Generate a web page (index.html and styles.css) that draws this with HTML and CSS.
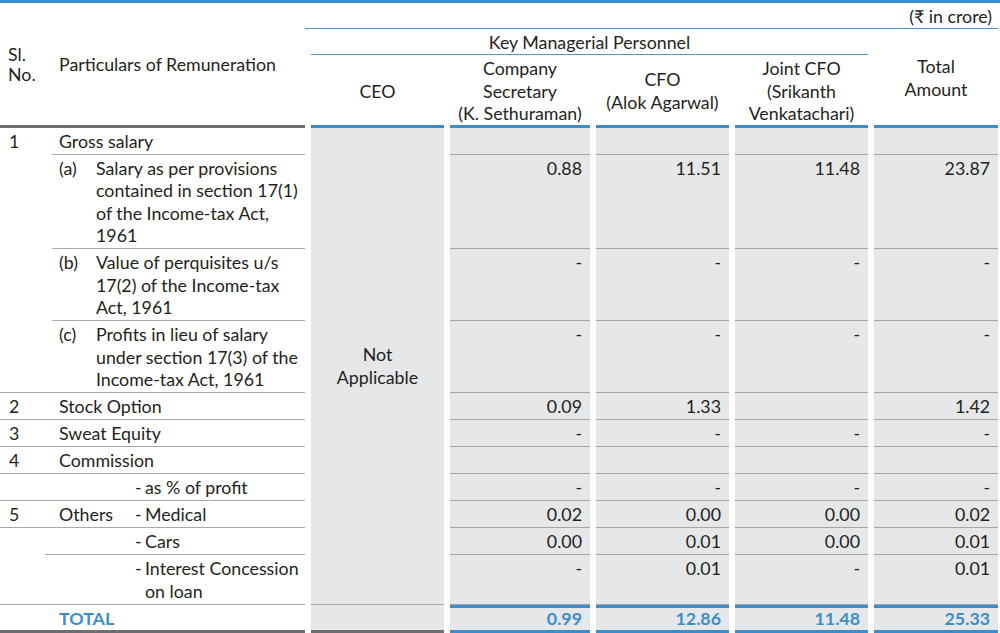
FILE: index.html
```html
<!DOCTYPE html>
<html lang="en">
<head>
<meta charset="utf-8">
<title>Remuneration to Key Managerial Personnel</title>
<link rel="stylesheet" href="styles.css">
</head>
<body>
<div class="sheet">
<table class="rem">
<colgroup>
<col class="c-sl"><col class="c-part"><col class="c-ceo"><col class="c-cs"><col class="c-cfo"><col class="c-jcfo"><col class="c-tot">
</colgroup>
<thead>
<tr>
<th class="sl hd" rowspan="3"><span class="sl-line">Sl.</span><span class="sl-line">No.</span></th>
<th class="part hd" rowspan="3">Particulars of Remuneration</th>
<th class="unit" colspan="5">(₹ in crore)</th>
</tr>
<tr>
<th class="kmp" colspan="4">Key Managerial Personnel</th>
<th class="role tot-h" rowspan="2">Total<br>Amount</th>
</tr>
<tr>
<th class="role">CEO</th>
<th class="role">Company<br>Secretary<br>(K. Sethuraman)</th>
<th class="role">CFO<br>(Alok Agarwal)</th>
<th class="role">Joint CFO<br>(Srikanth<br>Venkatachari)</th>
</tr>
</thead>
<tbody>
<tr>
<td class="sl ln" rowspan="4">1</td>
<td class="part ln">Gross salary</td>
<td class="ceo" rowspan="11">Not<br>Applicable</td>
<td class="num"></td><td class="num"></td><td class="num"></td><td class="num"></td>
</tr>
<tr>
<td class="part ln"><div class="item"><span class="tag">(a)</span><span class="txt">Salary as per provisions<br>contained in section 17(1)<br>of the Income-tax Act,<br>1961</span></div></td>
<td class="num">0.88</td><td class="num">11.51</td><td class="num">11.48</td><td class="num">23.87</td>
</tr>
<tr>
<td class="part ln"><div class="item"><span class="tag">(b)</span><span class="txt">Value of perquisites u/s<br>17(2) of the Income-tax<br>Act, 1961</span></div></td>
<td class="num">-</td><td class="num">-</td><td class="num">-</td><td class="num">-</td>
</tr>
<tr>
<td class="part ln"><div class="item"><span class="tag">(c)</span><span class="txt">Profits in lieu of salary<br>under section 17(3) of the<br>Income-tax Act, 1961</span></div></td>
<td class="num">-</td><td class="num">-</td><td class="num">-</td><td class="num">-</td>
</tr>
<tr>
<td class="sl ln">2</td>
<td class="part ln">Stock Option</td>
<td class="num">0.09</td><td class="num">1.33</td><td class="num"></td><td class="num">1.42</td>
</tr>
<tr>
<td class="sl ln">3</td>
<td class="part ln">Sweat Equity</td>
<td class="num">-</td><td class="num">-</td><td class="num">-</td><td class="num">-</td>
</tr>
<tr>
<td class="sl ln">4</td>
<td class="part ln">Commission</td>
<td class="num"></td><td class="num"></td><td class="num"></td><td class="num"></td>
</tr>
<tr>
<td class="sl ln"></td>
<td class="part ln"><div class="split"><span class="lab"></span><span class="sub"><span class="dash">-</span><span>as % of profit</span></span></div></td>
<td class="num">-</td><td class="num">-</td><td class="num">-</td><td class="num">-</td>
</tr>
<tr>
<td class="sl ln">5</td>
<td class="part ln"><div class="split"><span class="lab">Others</span><span class="sub"><span class="dash">-</span><span>Medical</span></span></div></td>
<td class="num">0.02</td><td class="num">0.00</td><td class="num">0.00</td><td class="num">0.02</td>
</tr>
<tr>
<td class="sl stub"></td>
<td class="part ln"><div class="split"><span class="lab"></span><span class="sub"><span class="dash">-</span><span>Cars</span></span></div></td>
<td class="num">0.00</td><td class="num">0.01</td><td class="num">0.00</td><td class="num">0.01</td>
</tr>
<tr>
<td class="sl ln"></td>
<td class="part ln"><div class="split"><span class="lab"></span><span class="sub"><span class="dash">-</span><span>Interest Concession<br>on loan</span></span></div></td>
<td class="num">-</td><td class="num">0.01</td><td class="num">-</td><td class="num">0.01</td>
</tr>
<tr class="total">
<td class="sl"></td>
<td class="part">TOTAL</td>
<td class="ceo-t"></td>
<td class="num">0.99</td><td class="num">12.86</td><td class="num">11.48</td><td class="num">25.33</td>
</tr>
</tbody>
</table>
</div>
</body>
</html>
```

FILE: styles.css
```css
* { box-sizing: border-box; }
html, body { margin: 0; background: #fff; }
body {
  font-family: "Lato", "Noto Sans", "DejaVu Sans", sans-serif;
  font-size: 17.8px;
  color: #231f20;
}
.sheet {
  width: 1000px;
  border-top: 3px solid #3a8ecf;
}
.rem {
  width: 998px;
  border-collapse: separate;
  border-spacing: 0;
  table-layout: fixed;
  line-height: 22.5px;
}
.c-sl { width: 52px; }
.c-part { width: 253px; }
.c-ceo { width: 139px; }
.c-cs { width: 146px; }
.c-cfo { width: 139px; }
.c-jcfo { width: 139px; }
.c-tot { width: 130px; }

th { font-weight: normal; padding: 0; }
td { padding: 0; }

/* header */
.hd {
  text-align: left;
  vertical-align: middle;
  padding-bottom: 3px;
  box-shadow: inset 0 -3px #6d6e71;
}
.sl.hd { padding-left: 8px; }
.sl-line { display: block; line-height: 20px; height: 20px; }
.part.hd { padding-left: 7px; }
.unit {
  height: 26px;
  text-align: right;
  vertical-align: middle;
  padding-right: 6px;
  box-shadow: inset 0 -1px #4b9ad4;
}
.kmp {
  height: 26px;
  border-left: 6px solid #fff;
  text-align: center;
  vertical-align: middle;
  box-shadow: inset 0 -1px #4b9ad4;
}
.role {
  border-left: 6px solid #fff;
  text-align: center;
  vertical-align: middle;
  padding: 2px 0 3px;
  box-shadow: inset 0 -3px #3a8ecf;
}

/* body */
tbody td { vertical-align: top; padding-top: 2px; padding-bottom: 2.5px; }
tbody .sl { padding-left: 9px; }
tbody .part { padding-left: 7px; }
.ln { box-shadow: inset 0 -1px #a7a9ac; }
.stub {
  background: linear-gradient(#a7a9ac, #a7a9ac) right bottom / 7px 1px no-repeat;
}
.item { display: flex; }
.tag { width: 37px; flex: none; }
.split { display: flex; }
.lab { width: 76px; flex: none; }
.sub { display: flex; }
.dash { width: 10px; flex: none; }

.num {
  border-left: 6px solid #fff;
  background: #e6e7e8;
  background-clip: padding-box;
  text-align: right;
  padding-right: 8px;
  box-shadow: inset 0 -1px #a3a5a8;
}
.ceo {
  border-left: 6px solid #fff;
  background: #e6e7e8;
  background-clip: padding-box;
  text-align: center;
  vertical-align: middle !important;
  box-shadow: inset 0 -1px #a3a5a8;
}

/* total row */
.total td { padding-bottom: 4px; }
.total .sl, .total .part { box-shadow: inset 0 -3px #6d6e71; }
.total .part { color: #3a8ecf; font-weight: bold; }
.total .ceo-t {
  border-left: 6px solid #fff;
  background: #e6e7e8;
  background-clip: padding-box;
  box-shadow: inset 0 -3px #6d6e71;
}
.total .num {
  color: #3a8ecf;
  font-weight: bold;
  box-shadow: inset 0 3px #3a8ecf, inset 0 -3px #3a8ecf;
}
```
